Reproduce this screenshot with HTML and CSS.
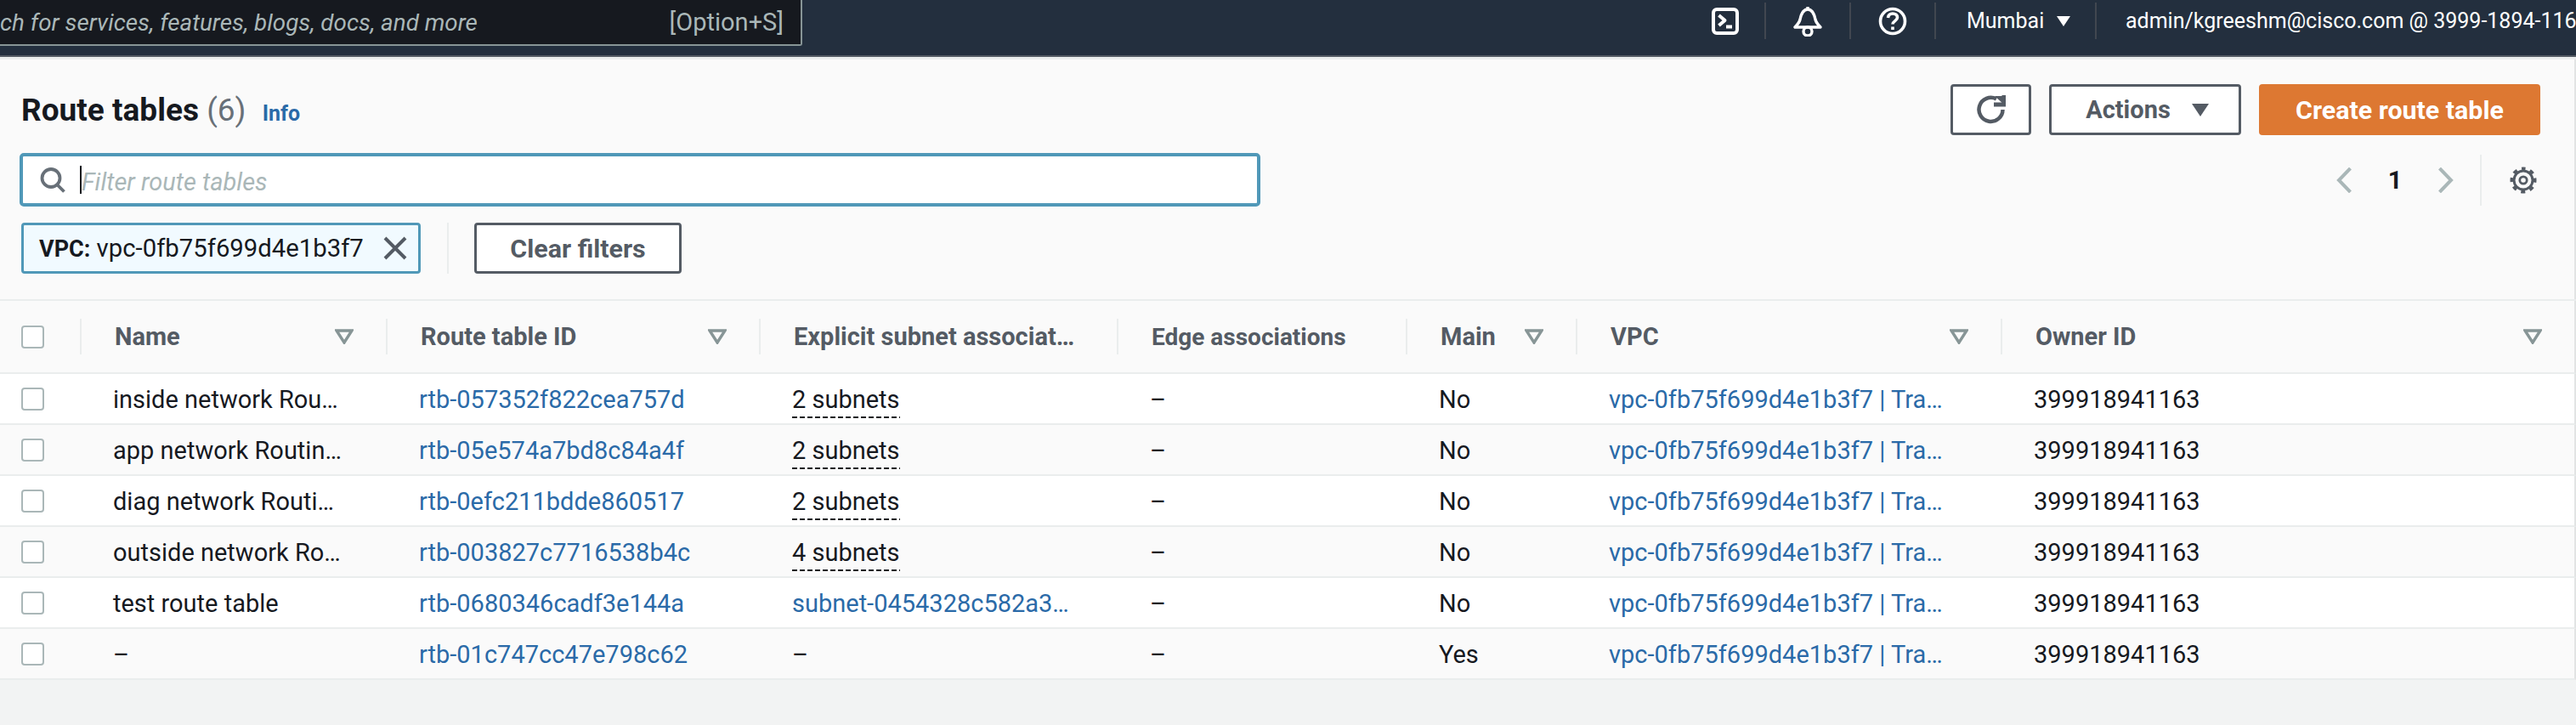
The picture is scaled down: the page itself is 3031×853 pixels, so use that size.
FILE: index.html
```html
<!DOCTYPE html>
<html lang="en">
<head>
<meta charset="utf-8">
<title>Route tables</title>
<link rel="stylesheet" href="styles.css">
</head>
<body>
<header class="topbar">
  <div class="search"><span class="search-text">ch for services, features, blogs, docs, and more</span><span class="search-key">[Option+S]</span></div>
  <div class="top-items">
    <span class="top-icon"><svg width="34" height="34" viewBox="0 0 34 34" fill="none" stroke="#fff" stroke-width="4"><rect x="3" y="3" width="28" height="28" rx="4"/><path d="M9.500 10l7 6-7 6" stroke-linejoin="round"/><path d="M18 23.500h7"/></svg></span>
    <span class="top-icon"><svg width="34" height="36" viewBox="0 0 34 36" fill="none" stroke="#fff" stroke-width="3.400" stroke-linejoin="round"><path d="M2 25h30c-3-3-5-5-6-9-1-5-3-12-9-12S9 11 8 16c-1 4-3 6-6 9z"/><path d="M17 1v3"/><circle cx="17" cy="30" r="5"/></svg></span>
    <span class="top-icon"><svg width="34" height="34" viewBox="0 0 34 34" fill="none" stroke="#fff" stroke-width="3.600"><circle cx="17" cy="17" r="14.500"/><path d="M11.500 13c.3-3.500 2.600-5 5.500-5 3.200 0 5.500 1.800 5.500 4.600 0 4-5.500 4-5.500 8"/><path d="M17 23.500v3.500"/></svg></span>
    <span class="top-region">Mumbai<i class="caret-white"></i></span>
    <span class="top-user">admin/kgreeshm@cisco.com @ 3999-1894-116</span>
  </div>
</header>
<div class="topline"></div>
<main class="panel">
  <div class="head-row">
    <h1 class="title">Route tables <span class="count">(6)</span> <a class="info">Info</a></h1>
    <div class="actions">
      <button class="btn btn-icon"><svg width="34" height="34" viewBox="0 0 34 34" fill="none" stroke="#545b64" stroke-width="4.500"><path d="M30.500 17A14 14 0 1 1 23 4.500"/><path d="M32 0v11H20" stroke-width="5"/><path d="M32 11L21 1h11z" fill="#545b64" stroke="none"/></svg></button>
      <button class="btn btn-actions">Actions<i class="caret-gray"></i></button>
      <button class="btn btn-primary">Create route table</button>
    </div>
  </div>
  <div class="filter-row">
    <div class="filter"><svg class="filter-icon" width="30" height="30" viewBox="0 0 30 30" fill="none" stroke="#687078" stroke-width="3.800"><circle cx="13" cy="12.500" r="10.500"/><path d="M20 20l8.500 8.500"/></svg><span class="cursor"></span><span class="placeholder">Filter route tables</span></div>
    <div class="pager">
      <svg width="18" height="30" viewBox="0 0 18 30" fill="none" stroke="#aab7b8" stroke-width="4"><path d="M16.500 1L3 15l13.500 14"/></svg>
      <span class="page-num">1</span>
      <svg width="18" height="30" viewBox="0 0 18 30" fill="none" stroke="#aab7b8" stroke-width="4"><path d="M1.500 1L15 15 1.500 29"/></svg>
      <span class="pager-sep"></span>
      <svg class="gear" width="32" height="32" viewBox="0 0 32 32" fill="none" stroke="#545b64"><circle cx="16" cy="16" r="13.500" stroke-width="4" stroke-dasharray="5 5.600" stroke-dashoffset="2.500" transform="rotate(-90 16 16)"/><circle cx="16" cy="16" r="11" stroke-width="3"/><circle cx="16" cy="16" r="4.200" stroke-width="2.800"/></svg>
    </div>
  </div>
  <div class="chip-row">
    <div class="chip"><span class="chip-text"><b class="chip-key">VPC:</b> vpc-0fb75f699d4e1b3f7</span><svg width="28" height="28" viewBox="0 0 28 28" fill="none" stroke="#545b64" stroke-width="4"><path d="M2 2l24 24M26 2L2 26"/></svg></div>
    <span class="chip-sep"></span>
    <button class="btn btn-clear">Clear filters</button>
  </div>
</main>
<table class="grid">
  <colgroup><col class="c0"><col class="c1"><col class="c2"><col class="c3"><col class="c4"><col class="c5"><col class="c6"><col class="c7"></colgroup>
  <thead>
    <tr>
      <th class="chk-cell"><span class="chk"></span></th>
      <th><div class="th"><span>Name</span><svg class="fi" viewBox="0 0 22 18"><path d="M2 2h18L11 16z"/></svg></div></th>
      <th><div class="th"><span>Route table ID</span><svg class="fi" viewBox="0 0 22 18"><path d="M2 2h18L11 16z"/></svg></div></th>
      <th><div class="th"><span>Explicit subnet associat…</span></div></th>
      <th><div class="th"><span class="edge">Edge associations</span></div></th>
      <th><div class="th"><span>Main</span><svg class="fi" viewBox="0 0 22 18"><path d="M2 2h18L11 16z"/></svg></div></th>
      <th><div class="th"><span>VPC</span><svg class="fi" viewBox="0 0 22 18"><path d="M2 2h18L11 16z"/></svg></div></th>
      <th><div class="th"><span>Owner ID</span><svg class="fi" viewBox="0 0 22 18"><path d="M2 2h18L11 16z"/></svg></div></th>
    </tr>
  </thead>
  <tbody>
    <tr><td class="chk-cell"><span class="chk"></span></td><td>inside network Rou…</td><td><a>rtb-057352f822cea757d</a></td><td><span class="dash">2 subnets</span></td><td>–</td><td>No</td><td><a>vpc-0fb75f699d4e1b3f7 | Tra…</a></td><td>399918941163</td></tr>
    <tr><td class="chk-cell"><span class="chk"></span></td><td>app network Routin…</td><td><a>rtb-05e574a7bd8c84a4f</a></td><td><span class="dash">2 subnets</span></td><td>–</td><td>No</td><td><a>vpc-0fb75f699d4e1b3f7 | Tra…</a></td><td>399918941163</td></tr>
    <tr><td class="chk-cell"><span class="chk"></span></td><td>diag network Routi…</td><td><a>rtb-0efc211bdde860517</a></td><td><span class="dash">2 subnets</span></td><td>–</td><td>No</td><td><a>vpc-0fb75f699d4e1b3f7 | Tra…</a></td><td>399918941163</td></tr>
    <tr><td class="chk-cell"><span class="chk"></span></td><td>outside network Ro…</td><td><a>rtb-003827c7716538b4c</a></td><td><span class="dash">4 subnets</span></td><td>–</td><td>No</td><td><a>vpc-0fb75f699d4e1b3f7 | Tra…</a></td><td>399918941163</td></tr>
    <tr><td class="chk-cell"><span class="chk"></span></td><td>test route table</td><td><a>rtb-0680346cadf3e144a</a></td><td><a>subnet-0454328c582a3…</a></td><td>–</td><td>No</td><td><a>vpc-0fb75f699d4e1b3f7 | Tra…</a></td><td>399918941163</td></tr>
    <tr><td class="chk-cell"><span class="chk"></span></td><td>–</td><td><a>rtb-01c747cc47e798c62</a></td><td>–</td><td>–</td><td>Yes</td><td><a>vpc-0fb75f699d4e1b3f7 | Tra…</a></td><td>399918941163</td></tr>
  </tbody>
</table>
</body>
</html>
```
FILE: styles.css
```css
* { box-sizing: border-box; }
html, body { margin: 0; height: 853px; overflow: hidden; }
body { background: #f2f3f3; font-family: Roboto, "Liberation Sans", sans-serif; font-size: 29px; color: #16191f; }
.topbar { height: 65px; background: #232f3e; display: flex; justify-content: space-between; overflow: hidden; }
.search { width: 944px; height: 54px; background: #16191f; border: 2px solid #879596; border-width: 0 2px 2px 0; border-radius: 0 0 3px 0; display: flex; justify-content: space-between; align-items: center; padding: 0 20px 0 0; color: #aab7b8; }
.search-text { font-style: italic; font-size: 27.800px; }
.top-items { display: flex; align-items: flex-start; color: #fff; width: 1018px; height: 65px; overflow: hidden; white-space: nowrap; flex: none; }
.top-icon { width: 100px; height: 43px; margin-top: 3px; display: flex; align-items: center; justify-content: center; border-right: 2px solid #414750; flex: none; }
.top-icon:first-child { width: 65px; justify-content: flex-start; }
.top-region { width: 189px; height: 43px; margin-top: 3px; padding-left: 36px; display: flex; align-items: center; gap: 15px; border-right: 2px solid #414750; font-size: 25px; flex: none; }
.top-user { margin: 3px 0 0 34px; height: 43px; line-height: 43px; font-size: 25px; }
.caret-white { width: 0; height: 0; border: 8px solid transparent; border-top: 12px solid #fff; border-bottom: 0; }
.topline { height: 5px; background: #eaeded; border-top: 2px solid #545b64; }
.panel { background: #fafafa; height: 282px; padding: 29px 40px 0 25px; border-right: 2px solid #e2e4e4; }
.head-row { display: flex; justify-content: space-between; height: 60px; align-items: center; }
.title { margin: 6px 0 0; font-size: 37px; font-weight: 700; line-height: 54px; }
.count { font-weight: 400; color: #687078; }
.info { font-size: 25px; font-weight: 700; color: #2a6aa8; margin-left: 10px; }
.actions { display: flex; gap: 21px; }
.btn { height: 60px; border: 3px solid #545b64; border-radius: 4px; background: #fff; font: 700 29px Roboto, "Liberation Sans", sans-serif; color: #545b64; padding: 0; display: flex; align-items: center; justify-content: center; }
.btn-icon { width: 95px; }
.btn-actions { width: 226px; gap: 25px; padding-left: 5px; }
.caret-gray { width: 0; height: 0; border: 10px solid transparent; border-top: 15px solid #545b64; border-bottom: 0; }
.btn-primary { width: 331px; background: #dd7832; border: 0; color: #fff; font-size: 30.400px; }
.filter-row { display: flex; justify-content: space-between; align-items: center; margin-top: 21px; height: 63px; }
.filter { width: 1460px; height: 63px; margin-left: -2px; background: #fff; border: 4px solid #5098b8; border-radius: 5px; display: flex; align-items: center; padding-left: 20px; }
.filter-icon { margin-right: 17px; }
.cursor { width: 2px; height: 33px; background: #16191f; }
.placeholder { font-style: italic; color: #aab7b8; padding-top: 4px; }
.pager { display: flex; align-items: center; height: 60px; }
.page-num { width: 102px; text-align: center; font-weight: 700; }
.pager-sep { width: 2px; height: 60px; background: #eaeded; margin: 0 33px 0 31px; }
.gear { margin-right: 4px; }
.chip-row { display: flex; align-items: center; margin-top: 19px; height: 60px; }
.chip { width: 470px; height: 60px; background: #f1faff; border: 3px solid #5098b8; border-radius: 4px; display: flex; align-items: center; justify-content: space-between; padding: 0 13px 0 18px; white-space: nowrap; font-size: 29.300px; }
.chip-key { font-size: 27px; }
.chip-sep { width: 2px; height: 60px; background: #eaeded; margin: 0 30px 0 31px; }
.btn-clear { width: 244px; font-size: 30.400px; }
.grid { width: 3031px; border-collapse: separate; border-spacing: 0; table-layout: fixed; border-top: 2px solid #eaeded; }
.c0 { width: 94px; } .c1 { width: 360px; } .c2 { width: 439px; } .c3 { width: 421px; } .c4 { width: 340px; } .c5 { width: 200px; } .c6 { width: 500px; } .c7 { width: 677px; }
th { height: 86px; padding: 0; background: #fafafa; border-bottom: 2px solid #eaeded; text-align: left; font-weight: 700; color: #545b64; }
.th { height: 42px; border-left: 2px solid #eaeded; padding: 0 38px 0 39px; display: flex; align-items: center; justify-content: space-between; }
.edge { font-size: 28px; }
.fi { width: 22px; height: 18px; fill: none; stroke: #879596; stroke-width: 3.400; flex: none; }
td { height: 60px; padding: 2px 0 0 39px; border-bottom: 2px solid #eaeded; white-space: nowrap; overflow: hidden; }
tr > :last-child { border-right: 2px solid #e2e4e4; }
tbody tr:nth-child(odd) td { background: #fff; }
tbody tr:nth-child(even) td { background: #fafafa; }
a { color: #2a6aa8; text-decoration: none; }
td.chk-cell, th.chk-cell { padding: 0 0 0 25px; }
.chk { display: block; width: 27px; height: 27px; background: #fff; border: 2px solid #aab7b8; border-radius: 4px; }
.dash { padding-bottom: 5px; background: repeating-linear-gradient(90deg, #16191f 0 6px, transparent 6px 9px) left bottom / 100% 2px no-repeat; }
```
